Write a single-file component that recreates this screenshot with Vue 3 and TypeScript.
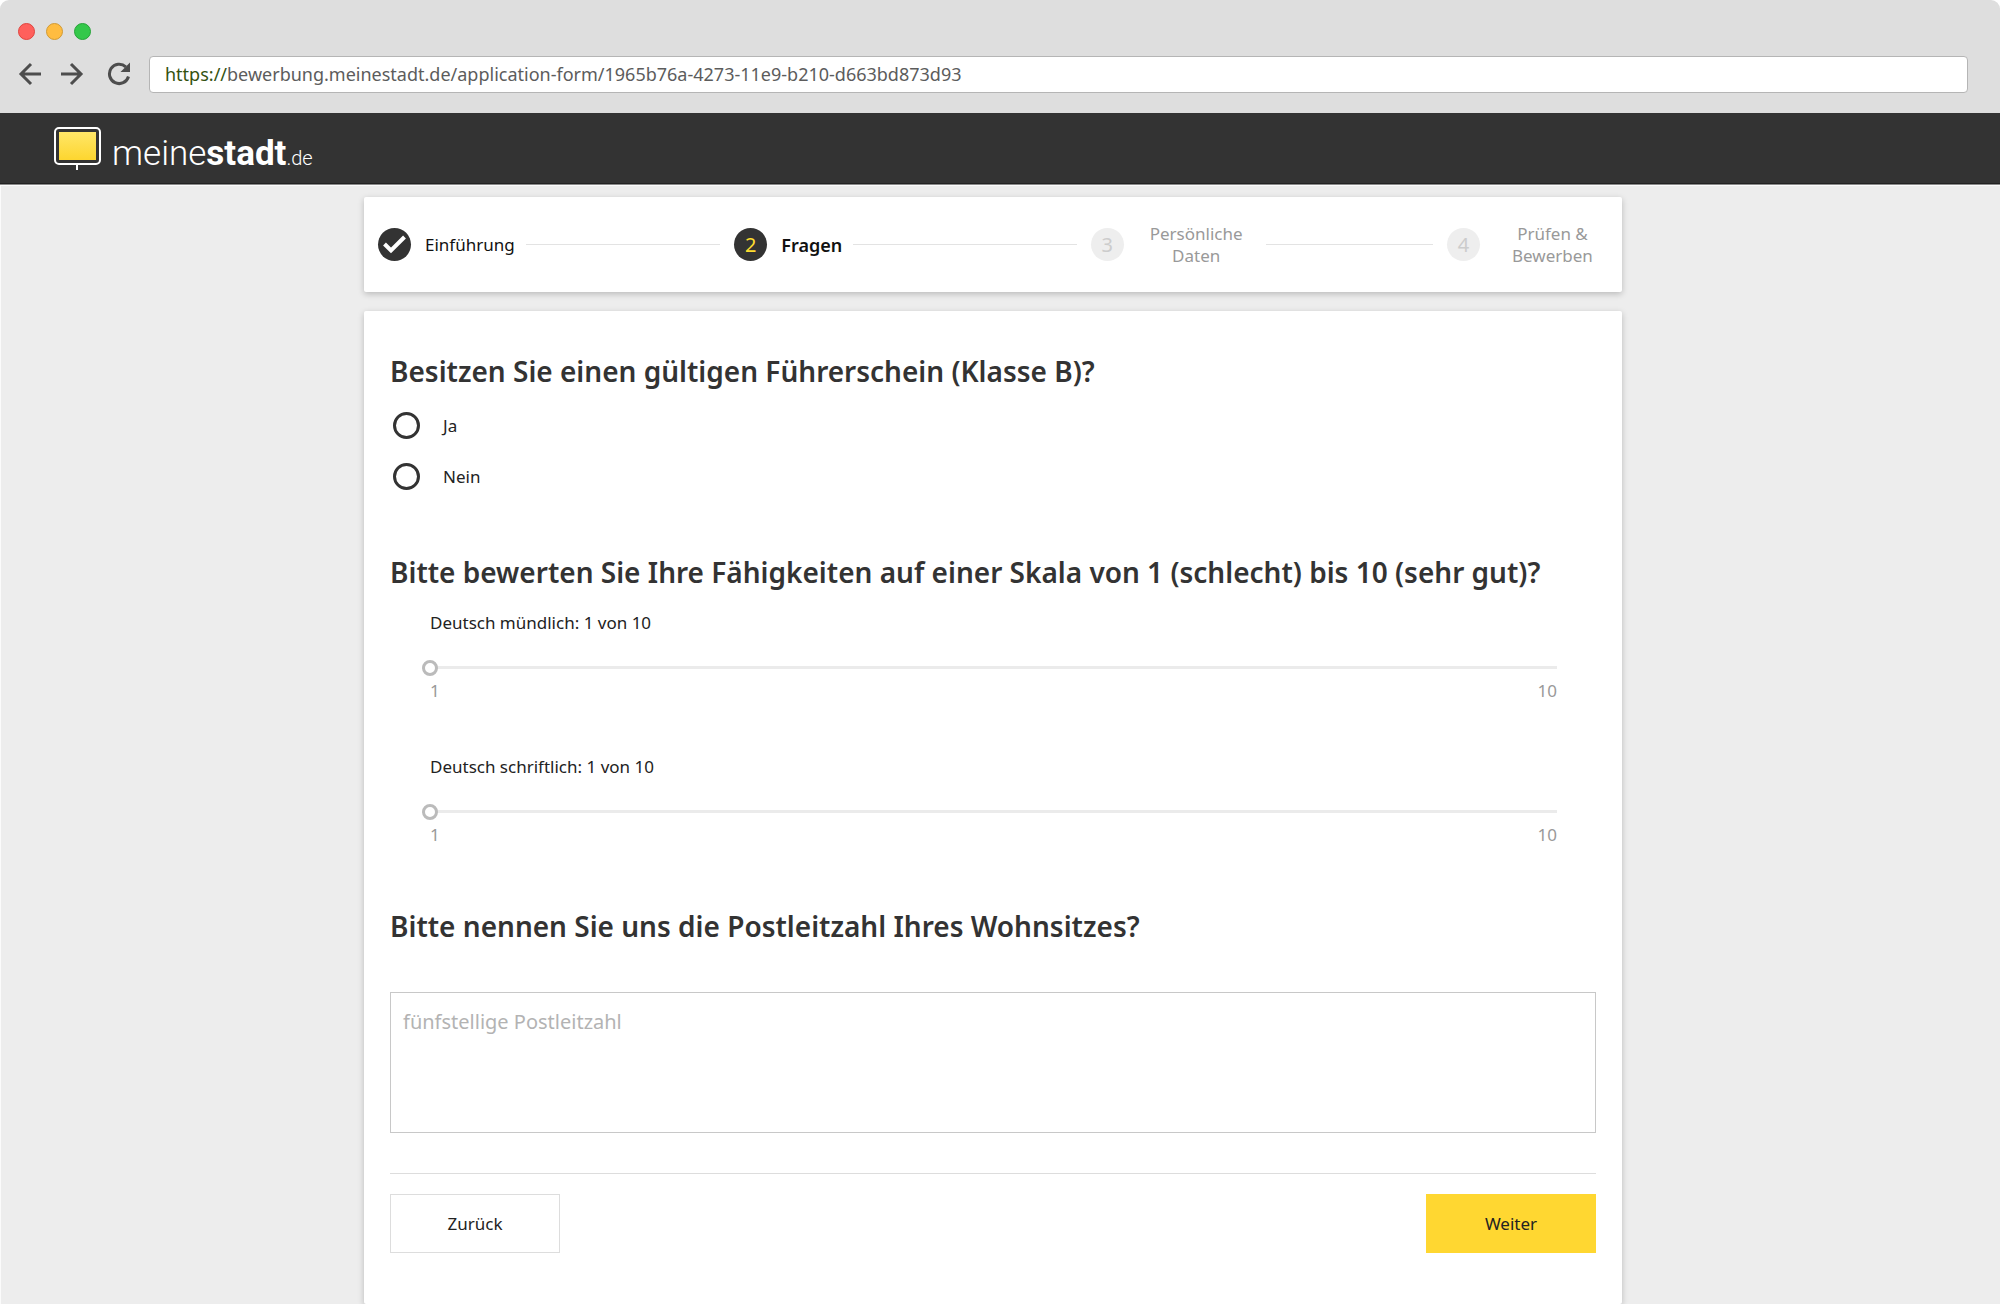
<script setup lang="ts">
import { reactive, ref } from 'vue'

interface Step {
  id: number
  label: string
  state: 'done' | 'active' | 'open'
}

interface Skill {
  id: string
  label: string
  value: number
}

const steps: Step[] = [
  { id: 1, label: 'Einführung', state: 'done' },
  { id: 2, label: 'Fragen', state: 'active' },
  { id: 3, label: 'Persönliche Daten', state: 'open' },
  { id: 4, label: 'Prüfen & Bewerben', state: 'open' },
]

const skills = reactive<Skill[]>([
  { id: 'muendlich', label: 'Deutsch mündlich', value: 1 },
  { id: 'schriftlich', label: 'Deutsch schriftlich', value: 1 },
])

const license = ref<string>('')
const zip = ref<string>('')
const address = ref<string>(
  'bewerbung.meinestadt.de/application-form/1965b76a-4273-11e9-b210-d663bd873d93',
)
</script>

<template>
  <div class="window">
    <header class="chrome">
      <div class="lights">
        <span class="light red"></span>
        <span class="light amber"></span>
        <span class="light green"></span>
      </div>
      <div class="toolbar">
        <button class="nav" type="button" aria-label="Zurück">
          <svg width="24" height="24" viewBox="0 0 24 24">
            <path d="M23 12H3M13 2L3 12L13 22" />
          </svg>
        </button>
        <button class="nav forward" type="button" aria-label="Vorwärts">
          <svg width="24" height="24" viewBox="0 0 24 24">
            <path d="M1 12H21M11 2L21 12L11 22" />
          </svg>
        </button>
        <button class="nav reload" type="button" aria-label="Neu laden">
          <svg width="24" height="24" viewBox="0 0 24 24">
            <path d="M21.500 14.500A9.700 9.700 0 1 1 18.800 4.800" />
            <path class="solid" d="M23 0.500V10H13.500Z" />
          </svg>
        </button>
        <label class="address">
          <span class="scheme">https://</span>
          <input v-model="address" type="text" aria-label="Adresse" spellcheck="false" />
        </label>
      </div>
    </header>

    <div class="brandbar">
      <a class="brand" href="#" aria-label="meinestadt.de">
        <svg width="47" height="44" viewBox="0 0 47 44">
          <defs>
            <linearGradient id="screen" x1="0" y1="0" x2="0" y2="1">
              <stop offset="0" stop-color="#ffe668" />
              <stop offset="1" stop-color="#fdd62f" />
            </linearGradient>
          </defs>
          <rect x="1" y="1" width="45" height="36" rx="4" fill="#333" stroke="#fff" stroke-width="2" />
          <rect x="5" y="5" width="37" height="28" fill="url(#screen)" />
          <rect x="22" y="38" width="2" height="5" fill="#fff" />
        </svg>
        <span class="wordmark">meine<b>stadt</b><small>.de</small></span>
      </a>
    </div>

    <main class="page">
      <nav class="card stepper" aria-label="Fortschritt">
        <ol>
          <li v-for="step in steps" :key="step.id" :class="['step', step.state]">
            <span class="bubble">
              <svg v-if="step.state === 'done'" width="33" height="33" viewBox="0 0 33 33">
                <path d="M6.500 16L13 22.500L26.500 9" />
              </svg>
              <template v-else>{{ step.id }}</template>
            </span>
            <span class="label">{{ step.label }}</span>
            <span v-if="step.id < steps.length" class="rule"></span>
          </li>
        </ol>
      </nav>

      <form class="card form" @submit.prevent>
        <fieldset class="license">
          <legend>Besitzen Sie einen gültigen Führerschein (Klasse B)?</legend>
          <label v-for="option in ['Ja', 'Nein']" :key="option" class="option">
            <input v-model="license" type="radio" name="license" :value="option" />
            {{ option }}
          </label>
        </fieldset>

        <fieldset class="skills">
          <legend>Bitte bewerten Sie Ihre Fähigkeiten auf einer Skala von 1 (schlecht) bis 10 (sehr gut)?</legend>
          <div v-for="skill in skills" :key="skill.id" class="skill">
            <label :for="skill.id">{{ skill.label }}: {{ skill.value }} von 10</label>
            <input :id="skill.id" v-model.number="skill.value" type="range" min="1" max="10" />
            <div class="scale"><span>1</span><span>10</span></div>
          </div>
        </fieldset>

        <div class="zip">
          <label for="zip">Bitte nennen Sie uns die Postleitzahl Ihres Wohnsitzes?</label>
          <textarea id="zip" v-model="zip" placeholder="fünfstellige Postleitzahl"></textarea>
        </div>

        <div class="actions">
          <button class="secondary" type="button">Zurück</button>
          <button class="primary" type="submit">Weiter</button>
        </div>
      </form>
    </main>
  </div>
</template>

<style>
body {
  margin: 0;
  background: #fff;
}
</style>

<style scoped>
* {
  box-sizing: border-box;
}

.window {
  display: flex;
  flex-direction: column;
  min-height: 100vh;
  font-family: "Noto Sans", "Open Sans", sans-serif;
  font-size: 17px;
  line-height: 24px;
  color: #222;
}

button,
input,
textarea {
  font: inherit;
  color: inherit;
}

/* Browser chrome */
.chrome {
  height: 113px;
  padding: 23px 32px 0 18px;
  background: #dedede;
  border-radius: 9px 9px 0 0;
}

.lights {
  display: flex;
  gap: 11px;
}

.light {
  width: 17px;
  height: 17px;
  border: 1px solid;
  border-radius: 50%;
}

.red {
  background: #ff605c;
  border-color: #e0443e;
}

.amber {
  background: #ffbc40;
  border-color: #d19a34;
}

.green {
  background: #34c84a;
  border-color: #27a338;
}

.toolbar {
  display: flex;
  align-items: center;
  margin-top: 16px;
}

.nav {
  display: flex;
  padding: 0 0 2px;
  border: 0;
  background: none;
}

.nav svg {
  fill: none;
  stroke: #4d4d4d;
  stroke-width: 3;
}

.nav .solid {
  fill: #4d4d4d;
  stroke: none;
}

.forward {
  margin-left: 18px;
}

.reload {
  margin-left: 23px;
}

.address {
  display: flex;
  align-items: center;
  flex: 1;
  height: 37px;
  margin-left: 18px;
  padding: 0 15px 2px;
  background: #fff;
  border: 1px solid #b5b5b5;
  border-radius: 4px;
  color: #5c5c5c;
  font-size: 18px;
}

.scheme {
  color: #34520f;
}

.address input {
  flex: 1;
  min-width: 0;
  padding: 0;
  border: 0;
  outline: 0;
  background: none;
}

/* Brand bar */
.brandbar {
  display: flex;
  height: 72px;
  padding: 14px 54px 0;
  background: #333;
  border-bottom: 1px solid #8a8a8a;
  box-shadow: inset 0 -1px #222;
}

.brand {
  display: flex;
  align-items: flex-start;
  gap: 11px;
  height: 44px;
  color: #fff;
  text-decoration: none;
}

.wordmark {
  font-family: Roboto, sans-serif;
  font-size: 35px;
  font-weight: 300;
  line-height: 53px;
}

.wordmark b {
  font-weight: 700;
}

.wordmark small {
  font-size: 20px;
}

/* Page */
.page {
  display: flex;
  flex-direction: column;
  flex: 1;
  gap: 19px;
  padding: 12px 14px 0 0;
  background: #ededed;
  box-shadow: inset 1px 1px #fbfbfb;
}

.card {
  width: 100%;
  max-width: 1258px;
  margin: 0 auto;
  background: #fff;
  border-radius: 2px;
  box-shadow: 0 2px 6px rgba(0, 0, 0, 0.22);
}

.stepper ol {
  display: flex;
  height: 95px;
  margin: 0;
  padding: 0 11px 0 14px;
  list-style: none;
}

.step {
  display: flex;
  align-items: center;
  flex: 1;
}

.step:last-child {
  flex: none;
}

.bubble {
  display: flex;
  flex: none;
  align-items: center;
  justify-content: center;
  width: 33px;
  height: 33px;
  border-radius: 50%;
  background: #333;
  color: #fddc2f;
  font-size: 20px;
}

.bubble svg {
  fill: none;
  stroke: #fff;
  stroke-width: 4;
}

.label {
  margin-left: 14px;
  color: #111;
  line-height: 22px;
}

.active .label {
  font-size: 18px;
  font-weight: 600;
}

.open .label {
  width: 117px;
  color: #999;
  text-align: center;
}

.open .bubble {
  background: #eee;
  color: #ccc;
}

.rule {
  flex: 1;
  height: 1px;
  margin: 0 14px 0 11px;
  background: #e3e3e3;
}

/* Form */
.form {
  flex: 1;
  padding: 42px 26px 50px;
}

fieldset {
  min-width: 0;
  margin: 0;
  padding: 0;
  border: 0;
}

legend,
.zip label {
  display: block;
  padding: 0;
  color: #333;
  font-size: 28px;
  font-weight: 600;
  line-height: 36px;
}

.license legend {
  margin-bottom: 11px;
}

.option {
  display: flex;
  align-items: center;
  gap: 23px;
  height: 51px;
  padding-left: 3px;
}

.option input {
  appearance: none;
  width: 27px;
  height: 27px;
  margin: 0;
  border: 3px solid #333;
  border-radius: 50%;
}

.option input:checked {
  background: radial-gradient(#333 0 6px, #fff 7px);
}

.skills {
  margin-top: 52px;
}

.skill {
  display: flex;
  flex-direction: column;
  margin-top: 52px;
  padding: 0 39px 0 40px;
}

legend + .skill {
  margin-top: 21px;
}

.skill input {
  appearance: none;
  height: 16px;
  margin: 24px 0 4px -8px;
  background: none;
}

.skill input::-webkit-slider-runnable-track {
  height: 3px;
  background: #ebebeb;
}

.skill input::-webkit-slider-thumb {
  appearance: none;
  width: 16px;
  height: 16px;
  margin-top: -6px;
  background: #fff;
  border: 3px solid #bbb;
  border-radius: 50%;
}

.scale {
  display: flex;
  justify-content: space-between;
  color: #999;
}

.zip {
  margin-top: 61px;
}

.zip textarea {
  display: block;
  width: 100%;
  height: 141px;
  margin-top: 48px;
  padding: 15px 12px;
  border: 1px solid #c8c8c8;
  outline: 0;
  resize: none;
  font-size: 20px;
  line-height: 28px;
}

.zip textarea::placeholder {
  color: #b3b3b3;
}

.actions {
  display: flex;
  justify-content: space-between;
  margin-top: 40px;
  padding-top: 20px;
  border-top: 1px solid #ddd;
}

.actions button {
  width: 170px;
  height: 59px;
  padding: 0;
  border: 1px solid #ddd;
  background: #fff;
}

.actions .primary {
  border-color: #ffd731;
  background: #ffd731;
}
</style>
